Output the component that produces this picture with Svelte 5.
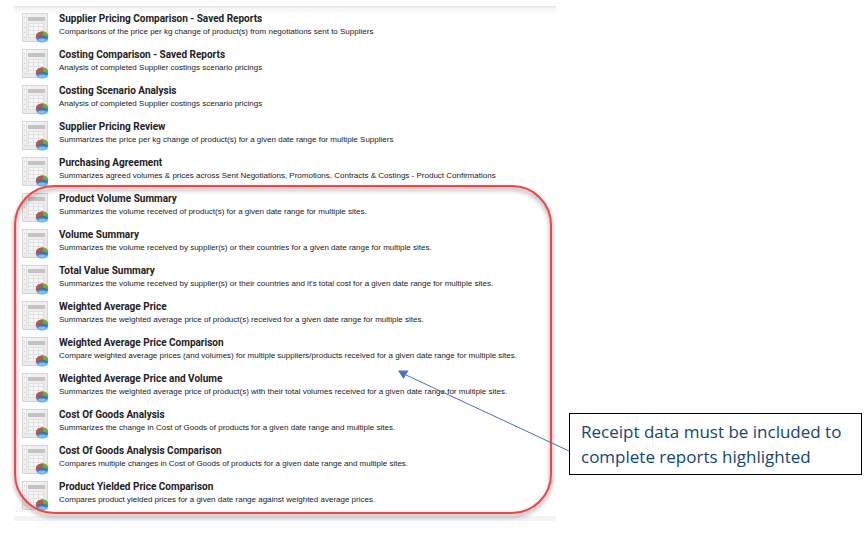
<script>
  const openReports = [
    ['Supplier Pricing Comparison - Saved Reports', 'Comparisons of the price per kg change of product(s) from negotiations sent to Suppliers'],
    ['Costing Comparison - Saved Reports', 'Analysis of completed Supplier costings scenario pricings'],
    ['Costing Scenario Analysis', 'Analysis of completed Supplier costings scenario pricings'],
    ['Supplier Pricing Review', 'Summarizes the price per kg change of product(s) for a given date range for multiple Suppliers'],
    ['Purchasing Agreement', 'Summarizes agreed volumes & prices across Sent Negotiations, Promotions, Contracts & Costings - Product Confirmations'],
  ];
  const receiptReports = [
    ['Product Volume Summary', 'Summarizes the volume received of product(s) for a given date range for multiple sites.'],
    ['Volume Summary', 'Summarizes the volume received by supplier(s) or their countries for a given date range for multiple sites.'],
    ['Total Value Summary', "Summarizes the volume received by supplier(s) or their countries and it's total cost for a given date range for multiple sites."],
    ['Weighted Average Price', 'Summarizes the weighted average price of product(s) received for a given date range for multiple sites.'],
    ['Weighted Average Price Comparison', 'Compare weighted average prices (and volumes) for multiple suppliers/products received for a given date range for multiple sites.'],
    ['Weighted Average Price and Volume', 'Summarizes the weighted average price of product(s) with their total volumes received for a given date range for multiple sites.'],
    ['Cost Of Goods Analysis', 'Summarizes the change in Cost of Goods of products for a given date range and multiple sites.'],
    ['Cost Of Goods Analysis Comparison', 'Compares multiple changes in Cost of Goods of products for a given date range and multiple sites.'],
    ['Product Yielded Price Comparison', 'Compares product yielded prices for a given date range against weighted average prices.'],
  ];
</script>

{#snippet row(title, text)}
  <li>
    <svg class="icon" viewBox="0 0 27 30" aria-hidden="true">
      <rect x="0.5" y="0.5" width="25" height="28" fill="url(#paper)" stroke="#d6d6d6" />
      <path d="M4.5 1v27" stroke="#e2e2e2" />
      <path d="M2 4.5h1M2 9.5h1M2 14.5h1M2 19.5h1M2 24.5h1" stroke="#ccc" />
      <rect x="6" y="4" width="17" height="4" fill="#c3c3c3" />
      <rect x="6.5" y="10.5" width="15" height="14" fill="#f7f7f7" stroke="#e0e0e0" />
      <path d="M6.5 13.5h15M6.5 17.5h15M6.5 21.5h15M11.5 10.5v14M16.5 10.5v14" stroke="#e0e0e0" fill="none" />
      <ellipse cx="20" cy="24" rx="6.2" ry="5.6" fill="url(#sea)" />
      <path d="M20.5 22.6L14 24.2C13.6 20.8 17 18.4 21 18.4z" fill="#d2502a" />
      <path d="M20.5 22.6L21 18.4c3.4 0 5.7 2.6 5.2 5.6z" fill="#62b52c" />
      <ellipse cx="20" cy="27" rx="4" ry="1.6" fill="#a5dbff" opacity=".6" />
    </svg>
    <div>
      <h2>{title}</h2>
      <p>{text}</p>
    </div>
  </li>
{/snippet}

<svg class="defs" width="0" height="0" aria-hidden="true">
  <linearGradient id="paper" x1="0" y1="0" x2="1" y2="1">
    <stop stop-color="#f6f6f6" /><stop offset="1" stop-color="#e5e5e5" />
  </linearGradient>
  <linearGradient id="sea" x1="0" y1="0" x2="0" y2="1">
    <stop offset=".4" stop-color="#2f68b4" /><stop offset="1" stop-color="#5bb2ee" />
  </linearGradient>
</svg>

<main>
  <section class="panel">
    <ul>
      {#each openReports as [title, text]}{@render row(title, text)}{/each}
    </ul>
    <ul class="marked">
      {#each receiptReports as [title, text]}{@render row(title, text)}{/each}
    </ul>
  </section>
  <aside>
    <svg class="arrow" width="172" height="82" aria-hidden="true">
      <path d="M171 81L8 5" stroke="#4472c4" fill="none" />
      <path d="M0 0.5L10.5 0.5L5.5 9z" fill="#4472c4" />
    </svg>
    Receipt data must be included to complete reports highlighted
  </aside>
</main>

<style>
  :global(body) { margin: 0; background: #fff; }
  .defs { position: absolute; }
  main {
    display: flex;
    align-items: flex-end;
    padding: 6px 6px 0 14px;
    font-family: "Liberation Sans", Arial, sans-serif;
  }
  .panel {
    flex: 0 0 542px;
    min-width: 0;
    box-sizing: border-box;
    padding-top: 7px;
    border-bottom: 5px solid #f3f3f3;
    background: linear-gradient(#dedede, #f4f4f4 2px, #fff 8px);
  }
  ul { margin: 0; padding: 0; list-style: none; }
  li { display: flex; gap: 10px; height: 36px; padding-left: 8px; }
  .icon { flex: none; width: 27px; height: 30px; }
  h2 { margin: 0; font-family: Roboto, Arial, sans-serif; font-size: 10px; line-height: 12px; color: #222; }
  p { margin: 0; font-size: 8px; line-height: 13px; color: #222; white-space: nowrap; }
  .marked { position: relative; margin-bottom: -1px; }
  .marked::after {
    content: "";
    position: absolute;
    inset: -8px 4px 3px 0;
    border: 2px solid #fb4141;
    border-radius: 40px;
    filter: drop-shadow(0 3px 2px rgba(0, 0, 0, 0.45));
    pointer-events: none;
  }
  aside {
    position: relative;
    flex: 1;
    box-sizing: border-box;
    margin: 0 0 46px 13px;
    padding: 5px 11px;
    border: 1px solid #000;
    background: #fff;
    color: #134770;
    font-family: "Open Sans", Calibri, sans-serif;
    font-size: 17px;
    line-height: 25px;
  }
  .arrow { position: absolute; right: 100%; bottom: 22px; }
</style>
